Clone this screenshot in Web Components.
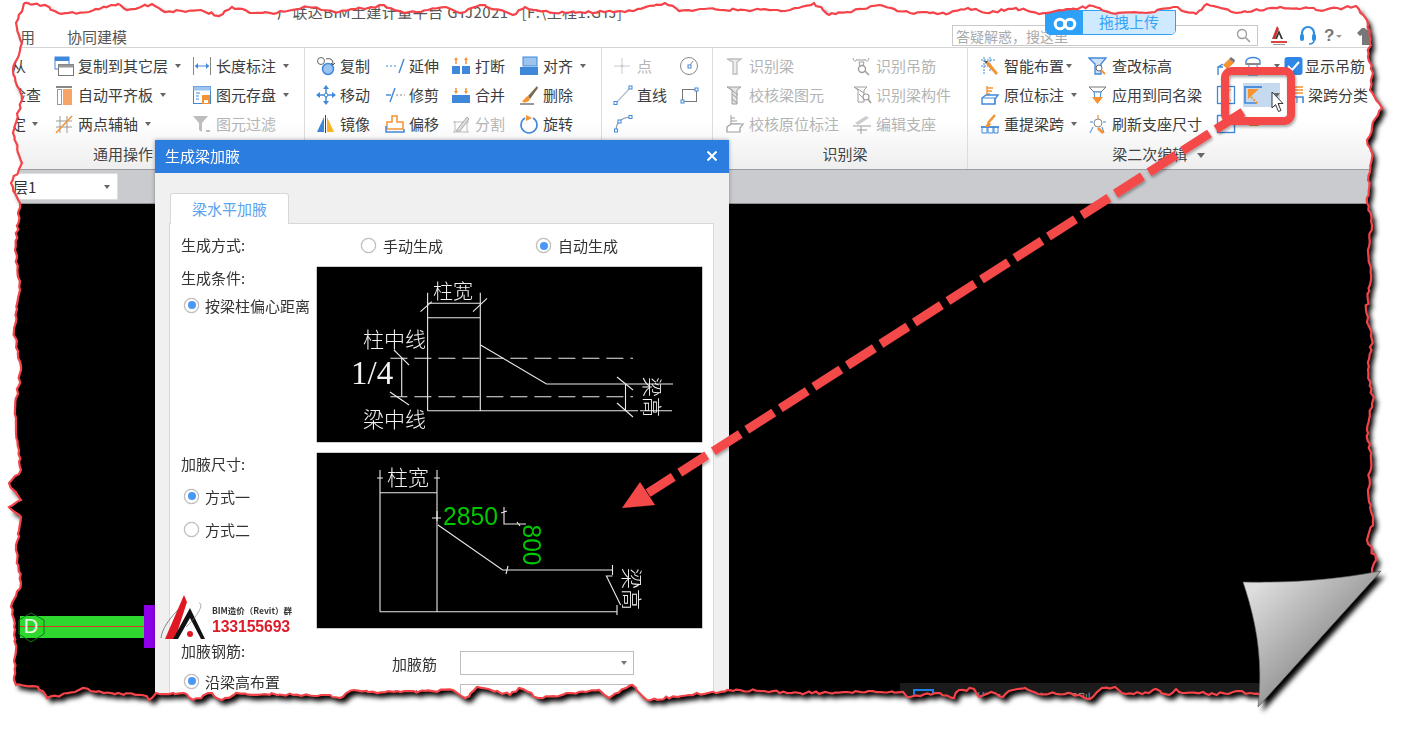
<!DOCTYPE html>
<html lang="zh">
<head>
<meta charset="utf-8">
<title>生成梁加腋</title>
<style>
  html,body{margin:0;padding:0;background:#fff}
  body{font-family:"Noto Sans CJK SC","Liberation Sans",sans-serif}
</style>
</head>
<body>
<app-shot>
  <title-bar slot="top"></title-bar>
  <ribbon-bar slot="top"></ribbon-bar>
  <layer-strip slot="top"></layer-strip>
  <cad-view slot="top"></cad-view>
  <beam-dialog slot="over"></beam-dialog>
  <bim-mark slot="over"></bim-mark>
  <upload-badge slot="over"></upload-badge>
  <call-out slot="edge"></call-out>
  <torn-edge slot="edge"></torn-edge>
</app-shot>
<script>
const B='#3f88d9',L='#9cc4ee',O='#f59331',K='#666',G='#bdbdbd',GD='#9d9d9d'
const ICONS={
  copylayer:`<rect x="1" y="1" width="14" height="12" fill="#fff" stroke="${B}"/><rect x="1" y="1" width="14" height="4" fill="${B}"/><rect x="4.5" y="8.5" width="15" height="11" fill="#fff" stroke="#777"/><rect x="4.5" y="8.5" width="15" height="3" fill="#999"/>`,
  dimlen:`<path d="M1.5 1v18M18.5 1v18" stroke="#888"/><path d="M3 10h14" stroke="${B}"/><path d="M3 10l3-3v6zM17 10l-3-3v6z" fill="${B}"/>`,
  autoalign:`<rect x="2" y="1" width="16" height="2" fill="#888"/><rect x="3.5" y="4.5" width="4" height="15" fill="#fff" stroke="#999"/><rect x="9" y="4" width="9" height="16" fill="#f7a468"/>`,
  save:`<rect x="1.500" y="1.500" width="17" height="17" fill="#fff" stroke="${B}"/><rect x="1.500" y="1.500" width="17" height="4" fill="${L}"/><path d="M4 8h4M4 11h3M4 14h3" stroke="${B}"/><rect x="10" y="10" width="8" height="9" fill="${O}"/><rect x="12" y="15" width="4" height="3" fill="#fff"/>`,
  axis:`<path d="M6 2v17M13 2v17M2 7h16M2 13h16" stroke="#999"/><path d="M2 19L18 2" stroke="${O}" stroke-width="1.500"/>`,
  filter:`<path d="M1 2h15l-6 7v9l-3-2V9z" fill="${G}"/><rect x="14" y="16" width="4" height="2" fill="${G}"/>`,
  copy:`<circle cx="5" cy="5" r="3.500" fill="#fff" stroke="#666"/><circle cx="12" cy="13" r="5.500" fill="${L}" stroke="${B}" stroke-width="1.500"/><path d="M10 3c4-1 7 0 7 5" fill="none" stroke="#555"/><path d="M15 7l2 2 2-2" fill="none" stroke="#555"/>`,
  extend:`<path d="M1 10h11" stroke="${B}" stroke-dasharray="2 2"/><path d="M14 17L19 3" stroke="${B}" stroke-width="1.400"/>`,
  trim:`<path d="M1 10h5" stroke="${B}" stroke-width="1.400"/><path d="M5 17L10 3" stroke="${B}" stroke-width="1.400"/><path d="M11 10h9" stroke="#888" stroke-dasharray="2 2"/>`,
  brk:`<rect x="1" y="10" width="8" height="8" fill="${B}"/><rect x="11" y="10" width="8" height="8" fill="${B}"/><path d="M5 3v5M15 3v5" stroke="${O}" stroke-width="1.500"/><path d="M3 4l2-3 2 3zM13 4l2-3 2 3z" fill="${O}"/>`,
  merge:`<rect x="1" y="10" width="18" height="8" fill="${B}"/><path d="M5 3v5M15 3v5" stroke="${O}" stroke-width="1.500"/><path d="M3 6l2 3 2-3zM13 6l2 3 2-3z" fill="${O}"/>`,
  align:`<rect x="4" y="1" width="14" height="9" fill="${L}" stroke="${B}"/><rect x="1" y="11" width="18" height="8" fill="${B}"/>`,
  move:`<path d="M10 2v16M2 10h16" stroke="${B}" stroke-width="1.500"/><path d="M10 0l-3 4h6zM10 20l-3-4h6zM0 10l4-3v6zM20 10l-4-3v6z" fill="${B}"/><circle cx="10" cy="10" r="1.800" fill="#fff" stroke="${B}"/>`,
  del:`<path d="M18 1L9 11l2 3L19 3z" fill="#7a6a55"/><path d="M9 11c-3 1-4 4-6 6 3 1 7 0 8-3z" fill="${O}"/><path d="M1 19h14" stroke="#333"/>`,
  mirror:`<path d="M8 3L1 18h7z" fill="${B}"/><path d="M11 3l7 15h-7z" fill="#fbb321"/><path d="M9.500 1v18" stroke="#444"/>`,
  offset:`<path d="M7 2h5v6h6v7H2V8h5z" fill="#fff" stroke="${O}" stroke-width="1.500"/><path d="M1 12v6h18v-3" fill="none" stroke="${B}" stroke-width="1.500"/>`,
  split:`<path d="M2 18h16M4 7v11M16 7v11M2 8h16" stroke="#bbb" fill="none"/><path d="M5 17L16 3l2 2-9 12z" fill="#ddd" stroke="#aaa"/>`,
  rotate:`<path d="M6 4a8 8 0 1 0 8 0" fill="none" stroke="${B}" stroke-width="1.600"/><path d="M7 1l6 3-6 3z" fill="${O}"/>`,
  point:`<path d="M9 2v16M1 10h16" stroke="#ccc"/><circle cx="9" cy="10" r="1.500" fill="#ccc"/>`,
  circ:`<circle cx="9" cy="10" r="8.500" fill="#fff" stroke="#888"/><rect x="8" y="9" width="3" height="3" fill="#fff" stroke="${B}"/><path d="M10 9l3-4" stroke="#888"/>`,
  line:`<path d="M3 18L17 3" stroke="#b0bcc8" stroke-width="1.200"/><rect x="1" y="16.500" width="3" height="3" fill="#fff" stroke="${B}"/><rect x="16" y="1" width="3" height="3" fill="#fff" stroke="${B}"/>`,
  rect:`<rect x="2.500" y="4.500" width="14" height="12" fill="#fff" stroke="#777"/><rect x="15" y="3" width="3" height="3" fill="#fff" stroke="${B}"/><rect x="1" y="15" width="3" height="3" fill="#fff" stroke="${B}"/>`,
  arc:`<path d="M3 17C3 9 8 4 17 3" fill="none" stroke="#8a98a8" stroke-width="1.200"/><rect x="1.500" y="15" width="3" height="3" fill="#fff" stroke="${B}"/><rect x="16" y="1.500" width="3" height="3" fill="#fff" stroke="${B}"/><rect x="5" y="6" width="3" height="3" fill="#fff" stroke="${B}"/>`,
  rbeam:`<path d="M2 3h14l-4 3v12H8V6z" fill="#eee" stroke="${G}" stroke-width="1.300"/>`,
  rhang:`<path d="M1 2c1 4 3 4 4 1M13 3c1 3 3 3 4-1M5 4h8" fill="none" stroke="${GD}"/><path d="M7 6h5l-1 4H8z" fill="none" stroke="${GD}"/><circle cx="10" cy="13" r="3.500" fill="#fff" stroke="${GD}" stroke-width="1.400"/><path d="M13 15l4 4" stroke="${GD}" stroke-width="1.600"/>`,
  rcheck:`<path d="M2 2h14l-4 3v14H7V5z" fill="#e4e4e4" stroke="${GD}"/><path d="M4 3l9 7M7 9l5 4M7 14l5 4" stroke="${GD}"/>`,
  rcomp:`<path d="M2 2h13l-3 3v12H6V5z" fill="#fff" stroke="${GD}"/><path d="M4 3l8 5M7 9l4 4" stroke="${GD}"/><circle cx="14" cy="12" r="3" fill="#fff" stroke="${GD}" stroke-width="1.200"/><path d="M16 14l3 4" stroke="${GD}" stroke-width="1.500"/>`,
  rmark:`<path d="M6 1v9h9M6 4h4M6 7h6" fill="none" stroke="${GD}"/><path d="M2 13l4-3h12l-3 4v4H2z" fill="#fff" stroke="${GD}" stroke-width="1.200"/>`,
  rsup:`<path d="M3 9l11-7 3 2-11 7z" fill="#ccc"/><path d="M1 12h18M5 16h10M9 12v8" stroke="${GD}"/>`,
  smart:`<path d="M4 1v18M10 1v14M1 4h14M1 10h12" stroke="${B}" stroke-dasharray="2 1"/><path d="M8 5l10 12-2 2L6 8z" fill="${O}"/><path d="M6 8l2-3-4 0z" fill="#555"/>`,
  place:`<path d="M7 1v9M7 3h6M7 6h5M7 9h3" stroke="${O}" stroke-width="1.400"/><path d="M2 13l4-3h12l-3 4v5H2z" fill="#fff" stroke="${B}" stroke-width="1.400"/><path d="M2 13h13v6" fill="none" stroke="${B}"/>`,
  reraise:`<path d="M8 9L15 1" stroke="${O}" stroke-width="2.400"/><path d="M1 13h18" stroke="${B}" stroke-width="1.800"/><path d="M2 13v6h5v-6M8 13v6h5v-6M14 13v6h4v-6" fill="none" stroke="${B}"/><path d="M5 13L8 8l3 2-2 3z" fill="${O}"/>`,
  editlevel:`<path d="M1 2h17l-5 6v10H7V8z" fill="#cfe2f8" stroke="${B}" stroke-width="1.300"/><circle cx="11" cy="12" r="3" fill="#fff" stroke="#666"/><path d="M13 14l4 4" stroke="${O}" stroke-width="2"/>`,
  applysame:`<path d="M1 2h17l-5 5H6z" fill="#fff" stroke="#777"/><path d="M6 7h7l-1 7H7z" fill="#fff" stroke="${B}"/><path d="M4 12h11l-5.500 7z" fill="${O}"/>`,
  refresh:`<path d="M10 1v4" stroke="${O}" stroke-width="1.300"/><circle cx="10" cy="9" r="4" fill="#fff" stroke="#888"/><path d="M2 8h3M15 8h3M5 13l-3 6M14 13l2 6" stroke="${B}"/><path d="M11 13l5 5-2 2-5-5z" fill="${O}"/>`,
  brush:`<path d="M7 9l6-6 5 4-7 6z" fill="${O}"/><path d="M13 3l2-2 4 3-1 3z" fill="#777"/><path d="M2 19v-8l5 0M2 11l5-3" fill="none" stroke="${B}" stroke-width="1.400"/>`,
  hanger:`<path d="M3 5a7 3.500 0 0 1 14 0v3H3z" fill="#fff" stroke="${B}" stroke-width="1.400"/><path d="M3 8h14" stroke="#888" stroke-width="2"/><path d="M6 9l-1 10h10L14 9" fill="#fff" stroke="${B}"/><path d="M8 13h4" stroke="${O}" stroke-width="2"/>`,
  box1:`<rect x="1.500" y="1.500" width="17" height="17" fill="#fff" stroke="${B}" stroke-width="1.300"/><path d="M5 4l10 12M15 4L5 16" stroke="${O}" stroke-dasharray="2 1.500"/>`,
  haunch:`<path d="M1 2h18" stroke="${B}" stroke-width="1.800"/><path d="M2 3v15h12" fill="none" stroke="${B}" stroke-width="1.600"/><path d="M5 4h11L5 14z" fill="${O}"/><path d="M8 12l7 7" stroke="${O}" stroke-width="2" stroke-dasharray="2 1.500"/>`,
  box2:`<rect x="1.500" y="1.500" width="17" height="17" fill="#fff" stroke="${B}" stroke-width="1.400"/>`,
  tri:`<path d="M6 12l5-7 5 7z" fill="${O}"/>`,
  span:`<path d="M11 2h8M11 5h8M11 8h8" stroke="${O}" stroke-width="1.400"/><path d="M8 18v-6h11v6M8 12h11" fill="none" stroke="${B}" stroke-width="1.600"/><path d="M13 12v6" stroke="${B}"/>`,
  check:`<rect x="0.500" y="1" width="18" height="18" rx="3" fill="#2f86e6"/><path d="M4 10l4 4 7-8" fill="none" stroke="#fff" stroke-width="2"/>`
}

class RbItem extends HTMLElement{
  constructor(){
    super();
    this.attachShadow({mode:'open'})
    const off=this.hasAttribute('off')
    const name=this.getAttribute('icon')
    this.shadowRoot.innerHTML=`
      <style>
        :host{display:flex;align-items:center;height:29px;font-size:15px;line-height:29px;white-space:nowrap;color:${off?'#b4b4b4':'#3c3c3c'}}
        svg{width:20px;height:20px;flex:none;margin-right:var(--gap,4px);${name?'':'display:none'}}
        .caret{width:0;height:0;border:3.500px solid transparent;border-top:4px solid #666;border-bottom:0;margin-left:var(--cg,7px)}
        :host([hot]) .wrap{background:#c5d9ef}
        .wrap{display:flex;align-items:center;height:24px}
      </style>
      <div class="wrap"><svg viewBox="0 0 20 20">${ICONS[name]||''}</svg><slot></slot>${this.hasAttribute('caret')?'<i class="caret"></i>':''}</div>`
  }
}
customElements.define('rb-item',RbItem)

class RbGroup extends HTMLElement{
  constructor(){
    super();
    this.attachShadow({mode:'open'})
    const w=this.getAttribute('w'),pad=this.getAttribute('pad'),cols=this.getAttribute('cols')
    this.shadowRoot.innerHTML=`
      <style>
        :host{display:flex;flex-direction:column;width:${w}px;flex:none;box-sizing:border-box;padding-top:3px;position:relative}
        :host(:not([last])){border-right:1px solid #dcdcdc}
        .cols{display:grid;grid-template-columns:${cols};grid-template-rows:repeat(3,29px);grid-auto-flow:column;padding-left:${pad}px;height:87px}
        .label{height:31px;line-height:31px;font-size:15px;color:#444;text-align:center}
      </style>
      <div class="cols"><slot></slot></div>
      <div class="label"><slot name="label"></slot></div>`
  }
}
customElements.define('rb-group',RbGroup)

class RibbonBar extends HTMLElement{
  constructor(){
    super();
    this.attachShadow({mode:'open'})
    this.shadowRoot.innerHTML=`
      <style>
        :host{display:flex;height:121px;background:linear-gradient(#fff 0,#fff 60%,#eeeeee 100%);border-bottom:1px solid #9b9da0;overflow:hidden}
        span.l{display:block}
      </style>
      <rb-group w="305" pad="0" cols="54px 138px 112px">
        <rb-item><span style="padding-left:11px">从</span></rb-item>
        <rb-item><span style="padding-left:11px">检查</span></rb-item>
        <rb-item caret style="--cg:6px"><span style="padding-left:11px">定</span></rb-item>
        <rb-item icon="copylayer" caret>复制到其它层</rb-item>
        <rb-item icon="autoalign" caret>自动平齐板</rb-item>
        <rb-item icon="axis" caret>两点辅轴</rb-item>
        <rb-item icon="dimlen" caret>长度标注</rb-item>
        <rb-item icon="save" caret>图元存盘</rb-item>
        <rb-item icon="filter" off>图元过滤</rb-item>
        <span slot="label" class="l" style="text-align:left;padding-left:93px">通用操作</span>
      </rb-group>
      <rb-group w="297" pad="11" cols="69px 66px 68px 71px">
        <rb-item icon="copy">复制</rb-item><rb-item icon="move">移动</rb-item><rb-item icon="mirror">镜像</rb-item>
        <rb-item icon="extend">延伸</rb-item><rb-item icon="trim">修剪</rb-item><rb-item icon="offset">偏移</rb-item>
        <rb-item icon="brk">打断</rb-item><rb-item icon="merge">合并</rb-item><rb-item icon="split" off>分割</rb-item>
        <rb-item icon="align" caret>对齐</rb-item><rb-item icon="del">删除</rb-item><rb-item icon="rotate">旋转</rb-item>
      </rb-group>
      <rb-group w="111" pad="11" cols="67px 30px">
        <rb-item icon="point" off>点</rb-item><rb-item icon="line">直线</rb-item><rb-item icon="arc"></rb-item>
        <rb-item icon="circ"></rb-item><rb-item icon="rect"></rb-item><rb-item></rb-item>
      </rb-group>
      <rb-group w="255" pad="12" cols="127px 100px">
        <rb-item icon="rbeam" off>识别梁</rb-item><rb-item icon="rcheck" off>校核梁图元</rb-item><rb-item icon="rmark" off>校核原位标注</rb-item>
        <rb-item icon="rhang" off>识别吊筋</rb-item><rb-item icon="rcomp" off>识别梁构件</rb-item><rb-item icon="rsup" off>编辑支座</rb-item>
        <span slot="label" class="l" style="padding-left:10px">识别梁</span>
      </rb-group>
      <rb-group w="439" last pad="12" cols="108px 128px 27px 41px 90px">
        <rb-item icon="smart" caret style="--cg:2px">智能布置</rb-item><rb-item icon="place" caret>原位标注</rb-item><rb-item icon="reraise" caret>重提梁跨</rb-item>
        <rb-item icon="editlevel">查改标高</rb-item><rb-item icon="applysame">应用到同名梁</rb-item><rb-item icon="refresh">刷新支座尺寸</rb-item>
        <rb-item icon="brush"></rb-item><rb-item icon="box1"></rb-item><rb-item icon="box2"></rb-item>
        <rb-item icon="hanger" caret></rb-item><rb-item icon="haunch" caret hot></rb-item><rb-item icon="tri"></rb-item>
        <rb-item icon="check" style="--gap:1px">显示吊筋</rb-item><rb-item icon="span">梁跨分类</rb-item><rb-item></rb-item>
        <span slot="label" class="l" style="padding-right:58px">梁二次编辑 <i style="display:inline-block;border:4px solid transparent;border-top:5px solid #666;border-bottom:0;margin:0 0 2px 6px"></i></span>
      </rb-group>`
  }
}
customElements.define('ribbon-bar',RibbonBar)

class TitleBar extends HTMLElement{
  constructor(){
    super();
    this.attachShadow({mode:'open'})
    this.shadowRoot.innerHTML=`
      <style>
        :host{display:block;height:48px;background:#fff;font-size:15px;color:#444;box-sizing:border-box;border-bottom:1px solid #d4d4d4}
        .title{height:24px;line-height:24px;padding-left:277px;white-space:nowrap;font-size:15px;letter-spacing:.42px;color:#555}
        .row{display:flex;align-items:center;height:23px;padding-left:20px}
        .tabs{display:flex;gap:32px;width:108px;flex:none;padding-top:2px;color:#555}
        .search{flex:none;margin-left:824px;width:306px;height:21px;box-sizing:border-box;border:1px solid #c9c9c9;display:flex;align-items:center;justify-content:space-between;padding:0 6px 0 3px;font-size:14px;color:#aaa;background:#fff}
        .search svg{width:15px;height:15px}
        .tools{display:flex;align-items:center;margin-left:11px}
        .tools svg{flex:none}
      </style>
      <div class="title">广联达BIM土建计量平台 GTJ2021 - [F:\\工程1.GTJ]</div>
      <div class="row">
        <div class="tabs"><span>用</span><span>协同建模</span></div>
        <div class="search"><span>答疑解惑，搜这里</span>
          <svg viewBox="0 0 15 15"><circle cx="6" cy="6" r="4.500" fill="none" stroke="#999" stroke-width="1.300"/><path d="M9.500 9.500L14 14" stroke="#999" stroke-width="1.500"/></svg></div>
        <div class="tools">
          <svg width="20" height="22" viewBox="0 0 20 22"><path d="M8 1l-5 13h3L10 4z" fill="#c33"/><path d="M10 5L6 14h2l2-5 2 5h2z" fill="#333"/><rect x="2" y="16" width="16" height="2" fill="#d44"/><rect x="4" y="19" width="12" height="1" fill="#999"/></svg>
          <svg style="margin-left:10px" width="18" height="22" viewBox="0 0 18 22"><path d="M3 12V8a6 6 0 0 1 12 0v4" fill="none" stroke="#2d8ee6" stroke-width="2.200"/><rect x="1" y="9" width="4" height="7" rx="2" fill="#2d8ee6"/><rect x="13" y="9" width="4" height="7" rx="2" fill="#2d8ee6"/><path d="M15 15c0 3-2 4-5 4" fill="none" stroke="#2d8ee6" stroke-width="1.600"/></svg>
          <span style="margin-left:7px;font:bold 17px 'Liberation Sans',sans-serif;color:#777">?</span>
          <i style="width:0;height:0;border:3px solid transparent;border-top:3px solid #999;border-bottom:0;margin:2px 0 0 2px"></i>
          <svg style="margin-left:14px" width="22" height="20" viewBox="0 0 22 20"><path d="M6 2L1 7l3 3 2-1v10h10V9l2 1 3-3-5-5h-3c-1 2-3 2-4 0z" fill="#777"/></svg>
        </div>
      </div>`
  }
}
customElements.define('title-bar',TitleBar)

class LayerStrip extends HTMLElement{
  constructor(){
    super();
    this.attachShadow({mode:'open'})
    this.shadowRoot.innerHTML=`
      <style>
        :host{display:flex;align-items:center;height:34px;background:#c9cbce;border-bottom:1px solid #8d8f92;box-sizing:border-box}
        .combo{width:118px;height:27px;box-sizing:border-box;background:#fff;border:1px solid #ddd;display:flex;align-items:center;justify-content:space-between;padding:0 7px 0 12px;font-size:15px;color:#333}
        i{width:0;height:0;border:3.500px solid transparent;border-top:4px solid #666;border-bottom:0}
      </style>
      <div class="combo"><span>层1</span><i></i></div>`
  }
}
customElements.define('layer-strip',LayerStrip)

class CadView extends HTMLElement{
  constructor(){
    super();
    this.attachShadow({mode:'open'})
    this.shadowRoot.innerHTML=`
      <style>
        :host{display:block;flex:1;background:#000;position:relative}
        svg{position:absolute;left:0;top:0;width:1407px;height:530px}
        .task{position:absolute;left:900px;top:479px;right:0;bottom:0;background:#1b1b1b}
        .task b{position:absolute;left:13px;top:6px;width:17px;height:17px;border:2px solid #1d7fe8}
        .task span{position:absolute;left:75px;top:5px;font-size:13px;color:#888;white-space:nowrap}
      </style>
      <svg viewBox="0 204 1407 530">
        <rect x="20" y="616" width="125" height="22" fill="#2fd82f"/>
        <path d="M20 626.500H145" stroke="#e8302a"/>
        <rect x="144" y="605" width="11" height="43" fill="#8f00ea"/>
        <path d="M31 613l13 7v14l-13 8-12-8v-14z" fill="none" stroke="#0c7a10"/>
        <text x="31" y="633" font-size="20" fill="#eafbe5" text-anchor="middle" font-family="Liberation Sans">D</text>
      </svg>
      <div class="task"><b></b><span>状态 楼层 柱 梁 识别 构件</span></div>`
  }
}
customElements.define('cad-view',CadView)

class UiRadio extends HTMLElement{
  constructor(){
    super();
    this.attachShadow({mode:'open'})
    this.shadowRoot.innerHTML=`
      <style>
        :host{display:flex;align-items:center;gap:6px;height:22px;font-size:15px;color:#333;white-space:nowrap}
        .o{width:15px;height:15px;box-sizing:border-box;border:1.500px solid #b8b8b8;border-radius:50%;background:#fff;display:flex;align-items:center;justify-content:center;flex:none;box-shadow:0 0 1px #aaa}
        :host([on]) .o::after{content:"";width:8px;height:8px;border-radius:50%;background:#4a98f4}
      </style>
      <span class="o"></span><slot></slot>`
  }
}
customElements.define('ui-radio',UiRadio)

class UiSelect extends HTMLElement{
  constructor(){
    super();
    this.attachShadow({mode:'open'})
    this.shadowRoot.innerHTML=`
      <style>
        :host{display:flex;align-items:center;justify-content:flex-end;width:174px;height:24px;box-sizing:border-box;border:1px solid #bdbdbd;background:#fff;padding-right:6px}
        i{width:0;height:0;border:3.500px solid transparent;border-top:4px solid #777;border-bottom:0}
      </style><i></i>`
  }
}
customElements.define('ui-select',UiSelect)

class CadPic extends HTMLElement{
  constructor(){
    super();
    this.attachShadow({mode:'open'})
    const one=this.getAttribute('kind')==='one'
    const cjk='font-family="Noto Sans CJK SC" font-weight="300" fill="#f2f2f2"'
    const txt=(x,y,s,size=21,ex='')=>`<text x="${x}" y="${y}" font-size="${size}" ${cjk} ${ex}>${s}</text>`
    const a=`<g stroke="#eaeaea" stroke-width="1.100" fill="none">
        <path d="M110.600 25.700V143.700M163.300 25.700V143.700M110.600 50.700H163.300M110.600 36.300H163.300M110.600 143.700H321"/>
        <path d="M103.500 44.700L114.800 34.700M156 44.700L170 31.300"/>
        <path d="M163.600 78L229.500 117H356M323 143.700H355"/>
        <path d="M84.700 91.300V129.700M77 83L92 98M73 125L92 138"/>
        <path d="M308.500 117V143.700M300 110L316 123M300 136L316 150"/>
        <path d="M73.400 91.300H316M73.400 129.700H316" stroke-dasharray="17 7"/></g>
      ${txt(116,32,'柱宽',20)}${txt(46,80,'柱中线')}${txt(46,160,'梁中线')}
      <text x="34" y="117" font-size="33" font-family="Liberation Serif" fill="#f2f2f2">1/4</text>
      ${txt(335,130,'梁高',20,'text-anchor="middle" dominant-baseline="central" transform="rotate(90 335 130)"')}`
    const b=`<g stroke="#eaeaea" stroke-width="1.100" fill="none">
        <path d="M63 17V158.700M120 17V158.700M63 39.700H120M63 158.700H300"/>
        <path d="M60 25H66M117 25H123M115 65H124M120 58V68"/>
        <path d="M187 54V71H209M184 60L190 58M200 69L203 73"/>
        <path d="M121 72L185.600 117H295.500M295.500 112V122M295.500 123L289.400 123L303.600 152M300 152V162M191 113L189 121"/></g>
      ${txt(70,32,'柱宽',21)}
      <text x="126" y="72" font-size="26" font-family="Liberation Sans" fill="#00c800" textLength="55" lengthAdjust="spacingAndGlyphs">2850</text>
      <text x="215" y="92" font-size="25" font-family="Liberation Sans" fill="#00c800" text-anchor="middle" dominant-baseline="central" transform="rotate(90 215 92)" textLength="41" lengthAdjust="spacingAndGlyphs">800</text>
      ${txt(316,136,'梁高',21,'text-anchor="middle" dominant-baseline="central" transform="rotate(90 316 136)"')}`
    this.shadowRoot.innerHTML=`
      <style>:host{display:block;width:385px;height:175px;background:#000;box-shadow:0 0 0 .5px #999}svg{display:block}</style>
      <svg width="385" height="175" viewBox="0 0 385 175">${one?a:b}</svg>`
  }
}
customElements.define('cad-pic',CadPic)

class BeamDialog extends HTMLElement{
  constructor(){
    super();
    this.attachShadow({mode:'open'})
    this.shadowRoot.innerHTML=`
      <style>
        :host{display:block;position:absolute;left:155px;top:140px;width:574px;height:594px;background:#f0f0f0;box-shadow:0 0 4px rgba(0,0,0,.35);font-size:15px;color:#333;white-space:nowrap}
        .head{height:33px;background:#2b7de0;color:#fff;display:flex;align-items:center;justify-content:space-between;padding:0 11px 2px 10px;box-sizing:border-box}
        .head svg{width:12px;height:12px}
        .tab{margin:19px 0 0 15px;width:119px;height:31px;background:#fff;border:1px solid #d8d8d8;border-bottom:0;border-radius:3px 3px 0 0;color:#5ba2ee;text-align:center;line-height:29px;box-sizing:border-box;position:relative;top:1px}
        .pane{margin-left:14px;width:545px;height:520px;background:#fff;border:1px solid #d8d8d8;box-sizing:border-box;padding:11px 0 0 11px}
        .grid{display:grid;grid-template-columns:136px 385px;row-gap:11px}
        .top{display:flex;align-items:center;height:21px;--o:0}
        .lbl{height:22px;line-height:22px}
        ui-radio{margin-left:3px}
        .top ui-radio{margin-left:0;gap:7px}
        .rebar{display:flex;flex-direction:column;align-items:flex-start;padding:12px 0 0 75px;gap:9px}
        .sel{display:flex;align-items:center;gap:23px}
      </style>
      <div class="head"><span>生成梁加腋</span><svg viewBox="0 0 12 12"><path d="M1.500 1.500l9 9M10.500 1.500l-9 9" stroke="#fff" stroke-width="2"/></svg></div>
      <div class="tab">梁水平加腋</div>
      <div class="pane"><div class="grid">
        <div class="lbl" style="height:21px;line-height:20px">生成方式:</div>
        <div class="top"><ui-radio style="margin-left:44px">手动生成</ui-radio><ui-radio style="margin-left:93px" on>自动生成</ui-radio></div>
        <div><div class="lbl">生成条件:</div><ui-radio on style="margin-top:5px">按梁柱偏心距离</ui-radio></div>
        <cad-pic kind="one"></cad-pic>
        <div><div class="lbl">加腋尺寸:</div><ui-radio on style="margin-top:10px">方式一</ui-radio><ui-radio style="margin-top:11px">方式二</ui-radio></div>
        <cad-pic kind="two"></cad-pic>
        <div style="padding-top:1px"><div class="lbl">加腋钢筋:</div><ui-radio on style="margin-top:8px">沿梁高布置</ui-radio></div>
        <div class="rebar"><div class="sel"><span>加腋筋</span><ui-select></ui-select></div><div class="sel"><span>加腋筋</span><ui-select></ui-select></div></div>
      </div></div>`
  }
}
customElements.define('beam-dialog',BeamDialog)

class BimMark extends HTMLElement{
  constructor(){
    super();
    this.attachShadow({mode:'open'})
    this.shadowRoot.innerHTML=`
      <style>
        :host{display:flex;position:absolute;left:160px;top:592px;align-items:flex-start;white-space:nowrap}
        svg{flex:none;width:52px;height:52px}
        .t{padding-top:12px}
        .a{font:bold 8.500px/12px "Noto Sans CJK SC",sans-serif;color:#333}
        .b{font:bold 15.800px/22px "Liberation Sans",sans-serif;color:#dc1c2a;letter-spacing:-.12px}
      </style>
      <svg viewBox="0 0 52 52"><path d="M24 3L27 10L15 47H5Z" fill="#e01822"/><path d="M30 16L45 47H41L30 26L18 47H13Z" fill="#111"/><circle cx="30" cy="42" r="3" fill="#e01822"/><path d="M1 46C2 37 9 27 18 18" fill="none" stroke="#555" stroke-width=".7"/><path d="M39 11C45 12 36 26 26 35" fill="none" stroke="#777" stroke-width=".6"/></svg>
      <div class="t"><div class="a">BIM造价（Revit）群</div><div class="b">133155693</div></div>`
  }
}
customElements.define('bim-mark',BimMark)

class UploadBadge extends HTMLElement{
  constructor(){
    super();
    this.attachShadow({mode:'open'})
    this.shadowRoot.innerHTML=`
      <style>
        :host{display:flex;position:absolute;left:1045px;top:10px;width:131px;height:25px;border-radius:0 0 5px 5px;overflow:hidden;box-sizing:border-box;border:1px solid #2da1f8;font-size:15px;color:#36a4f7}
        .l{width:37px;background:#2da1f8;display:flex;align-items:center;justify-content:center}
        .r{flex:1;background:#cfeaff;text-align:center;line-height:22px}
      </style>
      <div class="l"><svg width="24" height="16" viewBox="0 0 24 16"><circle cx="7" cy="9" r="4.800" fill="none" stroke="#fff" stroke-width="3"/><circle cx="17" cy="9" r="4.800" fill="none" stroke="#fff" stroke-width="3"/></svg></div>
      <div class="r">拖拽上传</div>`
  }
}
customElements.define('upload-badge',UploadBadge)

class CallOut extends HTMLElement{
  constructor(){
    super();
    this.attachShadow({mode:'open'})
    this.shadowRoot.innerHTML=`
      <style>:host{display:block;position:absolute;left:0;top:0;pointer-events:none}svg{display:block}</style>
      <svg width="1407" height="734" viewBox="0 0 1407 734">
        <defs><filter id="s" x="-10%" y="-10%" width="120%" height="120%"><feDropShadow dx="1" dy="2" stdDeviation="1.500" flood-color="#000" flood-opacity=".35"/></filter></defs>
        <path d="M1272 92v16l3.500-3.500 3 7 2.500-1-3-7h5z" fill="#fff" stroke="#222" stroke-width=".9"/>
        <g filter="url(#s)" fill="none" stroke="#f4484a">
          <rect x="1225" y="71" width="66" height="50" rx="7" stroke-width="8"/>
          <path d="M1243 112L648 493" stroke-width="9" stroke-dasharray="32 7.800"/>
          <path d="M622 508L640 482L655 505Z" fill="#f4484a" stroke="none"/>
        </g>
      </svg>`
  }
}
customElements.define('call-out',CallOut)

class TornEdge extends HTMLElement{
  constructor(){
    super();
    this.attachShadow({mode:'open'})
    const top=[[24,3],[45,5],[58,13],[89,12],[118,4],[127,10],[152,4],[165,12],[201,10],[219,16],[232,7],[254,13],[277,13],[308,7],[339,12],[384,5],[404,13],[428,10],[446,7],[460,13],[480,5],[513,15],[525,7],[554,13],[580,12],[625,12],[665,3],[679,11],[700,9],[745,10],[790,10],[814,3],[829,15],[847,12],[879,5],[910,13],[950,13],[968,8],[986,13],[1016,8],[1039,14],[1093,6],[1111,13],[1146,13],[1173,7],[1196,14],[1207,4],[1236,13],[1280,7],[1325,10],[1356,6]]
    const right=[[1367,20],[1370,43],[1368,57],[1373,73],[1370,90],[1382,108],[1372,127],[1367,140],[1372,153],[1367,203],[1372,225],[1368,250],[1371,280],[1366,310],[1372,340],[1368,370],[1373,400],[1367,430],[1371,460],[1368,490],[1373,520],[1367,540],[1376,560],[1372,573]]
    const bottom=[[1261,695],[1250,693],[1233,692],[1209,695],[1203,692],[1182,693],[1176,689],[1169,695],[1156,689],[1149,693],[1122,693],[1115,687],[1102,688],[1090,699],[1068,693],[1038,694],[1025,688],[1009,691],[1003,697],[991,692],[979,697],[974,689],[959,690],[954,698],[940,693],[907,697],[903,692],[880,692],[800,693],[740,690],[689,695],[647,700],[632,685],[609,698],[599,690],[538,698],[519,688],[510,695],[477,687],[465,698],[453,690],[377,693],[354,690],[340,698],[330,695],[293,695],[236,693],[222,700],[212,693],[193,700],[184,693],[156,693],[149,700],[142,695],[104,693],[83,688],[75,692],[47,698],[38,687],[16,685],[14,680]]
    const left=[[16,650],[12,603],[21,583],[16,550],[21,517],[9,507],[21,500],[9,483],[21,470],[19,450],[15,410],[21,370],[14,330],[20,290],[15,250],[20,203],[11,183],[22,163],[13,133],[22,100],[13,70],[22,43],[16,23],[24,3]]
    let seed=77
    const rnd=()=>{seed=(seed*16807)%2147483647;return seed/2147483647-.5}
    const jag=pts=>{
      let out=[]
      for(let i=0;i<pts.length-1;i++){
        const [x0,y0]=pts[i],[x1,y1]=pts[i+1]
        const n=Math.max(1,Math.round(Math.hypot(x1-x0,y1-y0)/4))
        for(let k=0;k<n;k++){
          const t=k/n,j=k===0?0:2.6
          out.push([(x0+(x1-x0)*t+rnd()*j).toFixed(1),(y0+(y1-y0)*t+rnd()*j).toFixed(1)])
        }
      }
      out.push(pts[pts.length-1])
      return out.map(p=>p.join(' ')).join('L')
    }
    const upper=jag(top.concat(right))
    const lower=jag(bottom.concat(left))
    const shape=`M${upper}L1381 571L1258 707L${lower}Z`
    const edge=`M${upper}M${lower}`
    this.shadowRoot.innerHTML=`
      <style>:host{display:block;position:absolute;left:0;top:0;pointer-events:none}svg{display:block}</style>
      <svg width="1407" height="734" viewBox="0 0 1407 734">
        <defs>
          <clipPath id="out"><path clip-rule="evenodd" d="M0 0H1407V734H0Z${shape}"/></clipPath>
          <filter id="b" x="-5%" y="-5%" width="110%" height="110%"><feGaussianBlur stdDeviation="2.600"/></filter>
          <linearGradient id="g" x1="0" y1="0" x2="1" y2="1"><stop offset=".1" stop-color="#dedede"/><stop offset=".75" stop-color="#808080"/></linearGradient>
        </defs>
        <path d="M0 0H1407V734H0Z${shape}" fill="#fff" fill-rule="evenodd"/>
        <g clip-path="url(#out)"><path d="${shape}" transform="translate(4 5)" fill="#000" filter="url(#b)"/></g>
        <path d="${edge}" fill="none" stroke="#f4444a" stroke-width="2.200"/>
        <path d="M1381 571C1335 580 1290 583 1243 582C1254 615 1264 655 1258 707Z" fill="url(#g)" stroke="#5f5f5f" stroke-width=".6"/>
      </svg>`
  }
}
customElements.define('torn-edge',TornEdge)

class AppShot extends HTMLElement{
  constructor(){
    super();
    this.attachShadow({mode:'open'})
    this.shadowRoot.innerHTML=`
      <style>
        :host{display:block;position:relative;width:1407px;height:734px;overflow:hidden;background:#fff;font-family:"Noto Sans CJK SC","Liberation Sans",sans-serif}
        .app{position:absolute;inset:0;display:flex;flex-direction:column;filter:blur(.45px)}
        ::slotted(cad-view){flex:1}
      </style>
      <div class="app"><slot name="top"></slot><slot name="over"></slot></div>
      <slot name="edge"></slot>`
  }
}
customElements.define('app-shot',AppShot)
</script>
</body>
</html>
